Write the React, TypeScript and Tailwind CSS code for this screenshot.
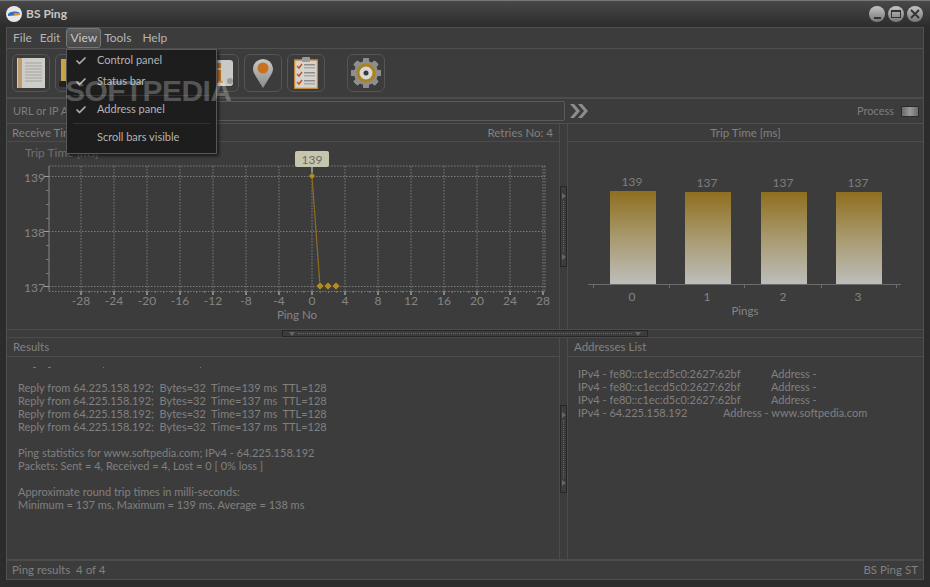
import React from 'react';
import { Check } from 'lucide-react';

const font = "font-['Lato','Noto_Sans',sans-serif]";

const xTicks = [-28, -24, -20, -16, -12, -8, -4, 0, 4, 8, 12, 16, 20, 24, 28];
const xPos = (v: number) => 312 + v * 8.25;

const replyLines = [
  'Reply from 64.225.158.192;  Bytes=32  Time=139 ms  TTL=128',
  'Reply from 64.225.158.192;  Bytes=32  Time=137 ms  TTL=128',
  'Reply from 64.225.158.192;  Bytes=32  Time=137 ms  TTL=128',
  'Reply from 64.225.158.192;  Bytes=32  Time=137 ms  TTL=128',
];

const bars = [
  { label: '0', value: '139', x: 610, top: 191 },
  { label: '1', value: '137', x: 685, top: 192 },
  { label: '2', value: '137', x: 761, top: 192 },
  { label: '3', value: '137', x: 836, top: 192 },
];

function Diamond({ x, y, r = 4 }: { x: number; y: number; r?: number }) {
  return (
    <polygon
      points={`${x},${y - r} ${x + r},${y} ${x},${y + r} ${x - r},${y}`}
      fill="#b08a24"
      stroke="#3a3320"
      strokeWidth="0.6"
    />
  );
}

function LineChart() {
  const dot = { stroke: '#7c7c7c', strokeWidth: 1, strokeDasharray: '1.5 1.5' };
  return (
    <svg viewBox="7 142 551 187" className="w-[551px] h-[187px] block">
      <text x="25" y="157" fontSize="12" fill="#6f6f6f">Trip Time [ms]</text>
      {xTicks.map((v) => (
        <g key={v}>
          <line x1={xPos(v)} x2={xPos(v)} y1="166" y2="291" {...dot} />
          <line x1={xPos(v)} x2={xPos(v)} y1="291" y2="295" stroke="#a0a0a0" strokeWidth="1.5" />
          <text x={xPos(v)} y="305" fontSize="12" fill="#858585" textAnchor="middle">{v}</text>
        </g>
      ))}
      {Array.from({ length: 57 }).map((_, i) => (
        <line key={i} x1={xPos(i - 28)} x2={xPos(i - 28)} y1="291" y2="293" stroke="#7a7a7a" />
      ))}
      <line x1="49" x2="545" y1="166" y2="166" {...dot} />
      <line x1="49" x2="545" y1="176.5" y2="176.5" {...dot} />
      <line x1="49" x2="545" y1="231.5" y2="231.5" {...dot} />
      <line x1="49" x2="545" y1="286.5" y2="286.5" {...dot} />
      <line x1="49" x2="545" y1="291.5" y2="291.5" {...dot} />
      <line x1="545" x2="545" y1="166" y2="291" {...dot} />
      <line x1="49" x2="49" y1="166" y2="291" stroke="#6e6e6e" strokeWidth="1.5" />
      {[176, 231, 286].map((y) => (
        <line key={y} x1="44" x2="49" y1={y + 0.5} y2={y + 0.5} stroke="#a0a0a0" />
      ))}
      {[190, 204, 218, 245, 259, 273].map((y) => (
        <line key={y} x1="46" x2="49" y1={y + 0.5} y2={y + 0.5} stroke="#7a7a7a" />
      ))}
      <text x="24" y="181.5" fontSize="12" fill="#858585">139</text>
      <text x="24" y="236.5" fontSize="12" fill="#858585">138</text>
      <text x="24" y="291.5" fontSize="12" fill="#858585">137</text>
      <text x="297" y="319" fontSize="11.5" fill="#858585" textAnchor="middle">Ping No</text>
      <line x1="312" y1="176" x2="320" y2="286" stroke="#8f6e1f" strokeWidth="1.2" />
      <line x1="312" x2="312" y1="166" y2="176" stroke="#a8a8a0" strokeWidth="1.5" />
      <Diamond x={312} y={176} r={3.5} />
      <Diamond x={320} y={286} />
      <Diamond x={328} y={286} />
      <Diamond x={336} y={286} />
      <rect x="295" y="151" width="34" height="16" rx="2" fill="#c6c6ae" />
      <text x="312" y="163.5" fontSize="12" fill="#6c6c64" textAnchor="middle">139</text>
    </svg>
  );
}

function BarChart() {
  return (
    <svg viewBox="568 142 354 187" className="w-[354px] h-[187px] block">
      <defs>
        <linearGradient id="barFill" x1="0" x2="0" y1="0" y2="1">
          <stop offset="0" stopColor="#8f6e1f" />
          <stop offset="0.5" stopColor="#a89a6e" />
          <stop offset="1" stopColor="#bdbdbb" />
        </linearGradient>
      </defs>
      {bars.map((b) => (
        <g key={b.label}>
          <text x={b.x + 22} y={b.top - 5} fontSize="12" fill="#7e7e7e" textAnchor="middle">{b.value}</text>
          <rect x={b.x} y={b.top} width="46" height={284 - b.top} fill="url(#barFill)" />
          <text x={b.x + 22} y="301" fontSize="12" fill="#858585" textAnchor="middle">{b.label}</text>
        </g>
      ))}
      <line x1="588" x2="901" y1="284.5" y2="284.5" stroke="#6c6c6c" />
      {[593, 669, 744, 821, 896].map((x) => (
        <line key={x} x1={x + 0.5} x2={x + 0.5} y1="284" y2="288" stroke="#6c6c6c" />
      ))}
      <text x="745" y="315" fontSize="11.5" fill="#858585" textAnchor="middle">Pings</text>
    </svg>
  );
}

function ToolButton({ children, className = '' }: { children?: React.ReactNode; className?: string }) {
  return (
    <div className={`w-[38px] h-[38px] rounded-[6px] border border-[#555] flex items-center justify-center shrink-0 ${className}`}>
      {children}
    </div>
  );
}

function BookIcon() {
  return (
    <svg width="28" height="30" viewBox="0 0 28 30">
      <rect x="0" y="0" width="28" height="30" fill="#cfcdc8" />
      <rect x="1" y="0" width="4" height="30" fill="#bd9a70" />
      {[5, 8, 11, 14, 17, 20, 23].map((y) => (
        <line key={y} x1="8" x2="25" y1={y} y2={y} stroke="#a5a39e" />
      ))}
    </svg>
  );
}

function FolderIcon() {
  return (
    <svg width="30" height="30" viewBox="0 0 30 30">
      <rect x="2" y="1" width="6" height="24" fill="#c9a24a" />
      <rect x="0" y="23" width="8" height="6" rx="2" fill="#222" />
    </svg>
  );
}

function InfoIcon() {
  return (
    <svg width="30" height="30" viewBox="0 0 30 30">
      <rect x="2" y="2" width="26" height="26" rx="3" fill="#c9c9c7" />
      <rect x="11" y="5" width="5" height="5" fill="#c77a22" />
      <rect x="10" y="12" width="6" height="12" fill="#c77a22" />
      <rect x="8" y="23" width="10" height="2" fill="#c77a22" />
      <circle cx="25" cy="23" r="3" fill="#9a9a9a" />
    </svg>
  );
}

function PinIcon() {
  return (
    <svg width="22" height="30" viewBox="0 0 22 30">
      <defs>
        <linearGradient id="pinFill" x1="0" x2="0" y1="0" y2="1">
          <stop offset="0" stopColor="#c8c8c6" />
          <stop offset="1" stopColor="#8c8c8a" />
        </linearGradient>
      </defs>
      <path d="M11 30 L3 17 A10 10 0 1 1 19 17 Z" fill="url(#pinFill)" />
      <circle cx="11" cy="10" r="5.5" fill="#c8711f" />
    </svg>
  );
}

function ClipboardIcon() {
  return (
    <svg width="24" height="32" viewBox="0 0 24 32">
      <rect x="0.5" y="3" width="23" height="28.5" fill="#d6d4ce" stroke="#c28b3e" strokeWidth="1.5" />
      <rect x="8" y="0" width="8" height="5" rx="1" fill="#9a9a9a" />
      {[9, 17, 25].map((y) => (
        <g key={y}>
          <path d={`M3 ${y} l2 2 l3 -4`} stroke="#c0551f" strokeWidth="1.5" fill="none" />
          <rect x="10" y={y - 2} width="11" height="1.5" fill="#8d8d8d" />
          <rect x="10" y={y + 1} width="11" height="1.5" fill="#a8a8a8" />
        </g>
      ))}
    </svg>
  );
}

function GearIcon() {
  return (
    <svg width="30" height="30" viewBox="0 0 30 30">
      <g fill="#8e8e8c">
        {[0, 45, 90, 135, 180, 225, 270, 315].map((a) => (
          <rect key={a} x="12" y="0" width="6" height="30" rx="1" transform={`rotate(${a} 15 15)`} />
        ))}
      </g>
      <circle cx="15" cy="15" r="12" fill="#8e8e8c" />
      <circle cx="15" cy="15" r="9.5" fill="#a98221" />
      <circle cx="15" cy="15" r="6.5" fill="#d8d8d6" />
      <circle cx="15" cy="15" r="2.5" fill="#3a3a3a" />
    </svg>
  );
}

function WinButton({ children }: { children: React.ReactNode }) {
  return (
    <div className="w-[16px] h-[16px] rounded-full bg-linear-to-b from-[#c4c4c4] to-[#777] flex items-center justify-center">
      {children}
    </div>
  );
}

function MenuItem({ label, checked }: { label: string; checked?: boolean }) {
  return (
    <div className="h-[21px] flex items-center text-[11px] text-[#b4b4b4]">
      <div className="w-[30px] flex justify-center pl-[3px] pr-[5px]">
        {checked && <Check size={12} strokeWidth={3.5} color="#b0b0b0" />}
      </div>
      <span>{label}</span>
    </div>
  );
}

function PanelHeader({ children, className = '' }: { children: React.ReactNode; className?: string }) {
  return (
    <div className={`h-[18px] shrink-0 border-b border-[#4c4c4c] flex items-center text-[11.5px] text-[#828282] ${className}`}>
      {children}
    </div>
  );
}

function VSplitter({ handleTop, handleHeight }: { handleTop: string; handleHeight: string }) {
  return (
    <div className={`w-[9px] shrink-0 border-x border-[#4c4c4c] flex justify-center ${handleTop}`}>
      <div className={`w-[7px] border border-[#272727] flex flex-col items-center justify-between py-[6px] ${handleHeight}`}>
        <div className="w-0 h-0 border-y-[3px] border-y-transparent border-l-[4px] border-l-[#666]" />
        <div className="flex-1 my-[2px] border-l border-dotted border-[#666]" />
        <div className="w-0 h-0 border-y-[3px] border-y-transparent border-l-[4px] border-l-[#666]" />
      </div>
    </div>
  );
}

export default function App() {
  return (
    <div className={`relative w-[930px] h-[587px] overflow-hidden bg-[#2c2c2c] flex flex-col ${font}`}>
      {/* title bar */}
      <div className="h-[27px] shrink-0 bg-linear-to-b from-[#484848] to-[#2c2c2c] border-t border-[#777] flex items-center pl-[6px] pr-[7px]">
        <svg width="16" height="16" viewBox="0 0 16 16">
          <circle cx="8" cy="8" r="8" fill="#e8e8e8" />
          <path d="M2 8 C5 5 10 5 14 7 L14 9 L2 10 Z" fill="#2f6fc0" />
          <path d="M8 7 L14 7 L14 9 L8 9 Z" fill="#e08a2a" />
        </svg>
        <span className="ml-[4px] text-[12px] font-bold text-[#c6c6c6]">BS Ping</span>
        <div className="ml-auto flex gap-[3px]">
          <WinButton>
            <div className="w-[7px] h-[2px] bg-[#333] mt-[7px]" />
          </WinButton>
          <WinButton>
            <div className="w-[10px] h-[8px] border border-t-2 border-[#333]" />
          </WinButton>
          <WinButton>
            <svg width="10" height="10" viewBox="0 0 10 10">
              <path d="M1 1 L9 9 M9 1 L1 9" stroke="#333" strokeWidth="1.8" />
            </svg>
          </WinButton>
        </div>
      </div>

      {/* window body */}
      <div className="mx-[6px] h-[553px] shrink-0 bg-[#3c3c3c] border border-[#505050] flex flex-col">
        {/* menu bar */}
        <div className="h-[21px] shrink-0 border-b border-[#505050] flex items-center pl-[2px] text-[12px] text-[#b4b4b4]">
          <span className="px-[4px]">File</span>
          <span className="px-[4px]">Edit</span>
          <span className="ml-[2px] h-[20px] px-[3px] flex items-center rounded-[3px] border border-[#777] bg-linear-to-b from-[#5e5e5e] to-[#484848] text-[#c8c8c8]">View</span>
          <span className="px-[3px]">Tools</span>
          <span className="ml-[3px] px-[5px]">Help</span>
        </div>

        {/* toolbar */}
        <div className="h-[50px] shrink-0 border-b-2 border-[#4c4c4c] flex items-center pl-[5px]">
          <ToolButton><BookIcon /></ToolButton>
          <ToolButton className="ml-[5px]"><FolderIcon /></ToolButton>
          <ToolButton className="ml-[5px]" />
          <ToolButton className="ml-[5px]" />
          <ToolButton className="ml-[22px]"><InfoIcon /></ToolButton>
          <ToolButton className="ml-[5px]"><PinIcon /></ToolButton>
          <ToolButton className="ml-[5px]"><ClipboardIcon /></ToolButton>
          <ToolButton className="ml-[22px]"><GearIcon /></ToolButton>
        </div>

        {/* address row */}
        <div className="h-[25px] shrink-0 border-b border-[#505050] flex items-center text-[11px] text-[#7e7e7e]">
          <span className="pl-[6px] w-[190px] shrink-0 whitespace-nowrap">URL or IP Address</span>
          <div className="w-[368px] h-[20px] border border-[#5a5a5a] rounded-[2px] shrink-0" />
          <svg width="18" height="14" viewBox="0 0 18 14" className="ml-[5px]">
            <path d="M0 0 H4 L10 7 L4 14 H0 L6 7 Z M8 0 H12 L18 7 L12 14 H8 L14 7 Z" fill="#8c8c8c" />
          </svg>
          <span className="ml-auto">Process</span>
          <div className="ml-[7px] mr-[4px] w-[18px] h-[11px] border border-[#2c2c2c] bg-linear-to-r from-[#6a6a6a] via-[#9a9a9a] to-[#6a6a6a]" />
        </div>

        {/* charts */}
        <div className="h-[205px] shrink-0 flex">
          <div className="w-[552px] shrink-0 flex flex-col">
            <PanelHeader className="justify-between pl-[5px] pr-[6px]">
              <span>Receive Time</span>
              <span>Retries No: 4</span>
            </PanelHeader>
            <LineChart />
          </div>
          <VSplitter handleTop="pt-[62px]" handleHeight="h-[81px]" />
          <div className="flex-1 flex flex-col">
            <PanelHeader className="justify-center">Trip Time [ms]</PanelHeader>
            <BarChart />
          </div>
        </div>

        {/* horizontal splitter */}
        <div className="h-[9px] shrink-0 border-y border-[#4c4c4c] pl-[275px]">
          <div className="w-[366px] h-full border border-[#272727] flex items-center px-[6px] gap-[3px]">
            <div className="w-0 h-0 border-x-[3px] border-x-transparent border-t-[4px] border-t-[#666]" />
            <div className="flex-1 border-t border-dotted border-[#666]" />
            <div className="w-0 h-0 border-x-[3px] border-x-transparent border-t-[4px] border-t-[#666]" />
          </div>
        </div>

        {/* results */}
        <div className="h-[223px] shrink-0 flex border-b-2 border-[#4c4c4c]">
          <div className="w-[552px] shrink-0 flex flex-col">
            <PanelHeader className="h-[19px] px-[6px]">Results</PanelHeader>
            <div className="pl-[11px] text-[11px] leading-[13px] text-[#808080] whitespace-pre">
              <div className="h-[11px] flex items-end">
                <div className="ml-[15px] w-[3px] h-px bg-[#777]" />
                <div className="ml-[12px] w-[3px] h-px bg-[#777]" />
                <div className="ml-[52px] w-[1px] h-px bg-[#777]" />
                <div className="ml-[96px] w-[1px] h-px bg-[#777]" />
              </div>
              <div className="h-[13px]" />
              {replyLines.map((l, i) => <div key={i}>{l}</div>)}
              <div className="h-[13px]" />
              <div>Ping statistics for www.softpedia.com; IPv4 - 64.225.158.192</div>
              <div>Packets: Sent = 4, Received = 4, Lost = 0 [ 0% loss ]</div>
              <div className="h-[13px]" />
              <div>Approximate round trip times in milli-seconds:</div>
              <div>Minimum = 137 ms, Maximum = 139 ms, Average = 138 ms</div>
            </div>
          </div>
          <VSplitter handleTop="pt-[67px]" handleHeight="h-[88px]" />
          <div className="flex-1 flex flex-col">
            <PanelHeader className="h-[19px] px-[6px]">Addresses List</PanelHeader>
            <div className="pl-[10px] pt-[10px] text-[11px] leading-[13px] text-[#808080] whitespace-pre">
              {[0, 1, 2].map((i) => (
                <div key={i} className="flex">
                  <span className="w-[193px]">IPv4 - fe80::c1ec:d5c0:2627:62bf</span>
                  <span>Address -</span>
                </div>
              ))}
              <div className="flex">
                <span className="w-[145px]">IPv4 - 64.225.158.192</span>
                <span>Address - www.softpedia.com</span>
              </div>
            </div>
          </div>
        </div>

        {/* status bar */}
        <div className="flex-1 flex items-center justify-between px-[5px] text-[11.5px] text-[#808080] whitespace-pre">
          <span>Ping results  4 of 4</span>
          <span>BS Ping ST</span>
        </div>
      </div>

      {/* open View menu */}
      <div className="absolute left-[66px] top-[49px] w-[151px] h-[105px] bg-[#1d1d1d] border border-[#595959] shadow-[2px_2px_3px_rgba(0,0,0,0.6)] flex flex-col">
        <MenuItem label="Control panel" checked />
        <MenuItem label="Status bar" checked />
        <div className="h-[7px] flex items-center pl-[6px] pr-[6px]"><div className="w-full h-px bg-[#333]" /></div>
        <MenuItem label="Address panel" checked />
        <div className="h-[7px] flex items-center pl-[6px] pr-[6px]"><div className="w-full h-px bg-[#333]" /></div>
        <MenuItem label="Scroll bars visible" />
      </div>

      {/* watermark */}
      <div className="absolute left-[65px] top-[73px] text-[30px] leading-[36px] font-bold tracking-[-0.6px] text-white/25 font-['Liberation_Sans',sans-serif] pointer-events-none">
        SOFTPEDIA
      </div>
    </div>
  );
}
